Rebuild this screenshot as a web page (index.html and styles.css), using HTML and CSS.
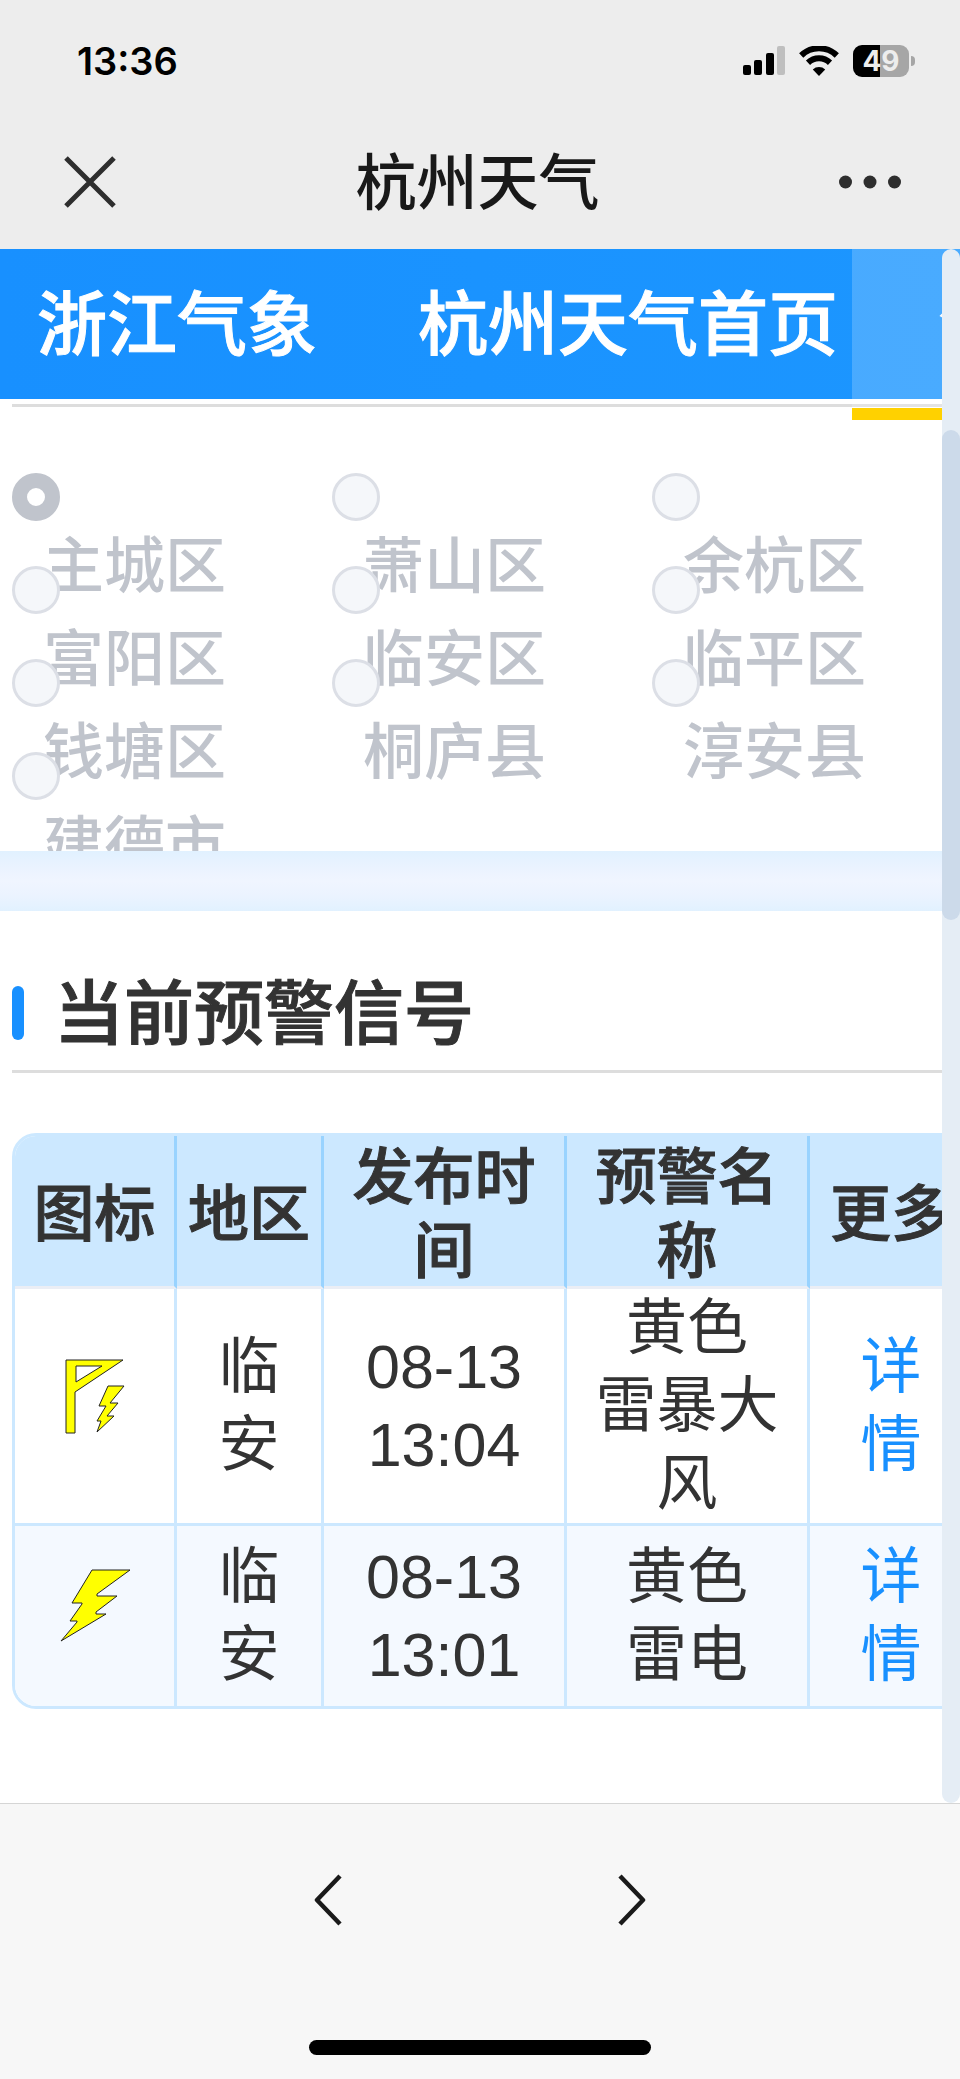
FILE: index.html
```html
<!DOCTYPE html>
<html lang="zh-CN">
<head>
<meta charset="utf-8">
<meta name="viewport" content="width=device-width, initial-scale=1">
<title>杭州天气</title>
<link rel="stylesheet" href="styles.css">
</head>
<body>
<header class="top">
  <div class="status">
    <time class="clock">13:36</time>
    <div class="indicators">
      <svg class="signal" width="42" height="30" viewBox="0 0 42 30" aria-hidden="true">
        <rect x="0" y="19" width="8" height="10" rx="2"/>
        <rect x="11" y="14" width="8" height="15" rx="2"/>
        <rect x="23" y="7" width="8" height="22" rx="2"/>
        <rect x="34" y="0" width="8" height="29" rx="2" fill="#bfbfbf"/>
      </svg>
      <svg class="wifi" width="40" height="30" viewBox="0 0 40 30" aria-hidden="true">
        <path d="M2.200 9.500A25.500 25.500 0 0 1 37.800 9.500" fill="none" stroke="#000" stroke-width="6"/>
        <path d="M9 16.700A16 16 0 0 1 31 16.700" fill="none" stroke="#000" stroke-width="6"/>
        <path d="M20 30L13.800 23.600A9 9 0 0 1 26.200 23.600Z"/>
      </svg>
      <div class="battery"><span class="battery-level">49</span></div>
    </div>
  </div>
  <div class="titlebar">
    <button class="icon-button" aria-label="关闭">
      <svg width="52" height="52" viewBox="0 0 52 52"><path d="M2 2L50 50M50 2L2 50" fill="none" stroke="#2e2e2e" stroke-width="5"/></svg>
    </button>
    <h1 class="title">杭州天气</h1>
    <button class="icon-button" aria-label="更多">
      <svg width="62" height="14" viewBox="0 0 62 14" fill="#2e2e2e"><circle cx="6.500" cy="7" r="6.500"/><circle cx="31" cy="7" r="6.500"/><circle cx="55.500" cy="7" r="6.500"/></svg>
    </button>
  </div>
</header>

<main class="page">
  <nav class="tabs">
    <a class="tab tab-first" href="#">浙江气象</a>
    <a class="tab" href="#">杭州天气首页</a>
    <a class="tab tab-active" href="#" aria-current="page">气象预警</a>
  </nav>

  <section class="regions">
    <div class="region-grid" role="radiogroup" aria-label="地区">
      <label class="region"><input type="radio" name="region" checked disabled><span>主城区</span></label>
      <label class="region"><input type="radio" name="region" disabled><span>萧山区</span></label>
      <label class="region"><input type="radio" name="region" disabled><span>余杭区</span></label>
      <label class="region"><input type="radio" name="region" disabled><span>富阳区</span></label>
      <label class="region"><input type="radio" name="region" disabled><span>临安区</span></label>
      <label class="region"><input type="radio" name="region" disabled><span>临平区</span></label>
      <label class="region"><input type="radio" name="region" disabled><span>钱塘区</span></label>
      <label class="region"><input type="radio" name="region" disabled><span>桐庐县</span></label>
      <label class="region"><input type="radio" name="region" disabled><span>淳安县</span></label>
      <label class="region"><input type="radio" name="region" disabled><span>建德市</span></label>
    </div>
  </section>

  <section class="warnings">
    <h2 class="heading">当前预警信号</h2>
    <div class="table-frame">
      <table class="table">
        <colgroup><col class="c-icon"><col class="c-area"><col class="c-wide"><col class="c-wide"><col class="c-more"></colgroup>
        <thead>
          <tr><th>图标</th><th>地区</th><th>发布时间</th><th>预警名称</th><th>更多</th></tr>
        </thead>
        <tbody>
          <tr>
            <td class="pic"><svg width="120" height="120" viewBox="0 0 120 120" role="img" aria-label="雷暴大风">
              <g fill="#ff0" stroke="#222" stroke-width="1">
                <path fill-rule="evenodd" d="M31 14H88L40 46V87H31ZM41 20V36L67 20Z"/>
                <path d="M73 40H89L75 57H83L72 70H79L62 86L66 75H62L71 60H64Z"/>
              </g></svg></td>
            <td>临安</td><td>08-13 13:04</td><td>黄色 雷暴大风</td><td><a href="#">详情</a></td>
          </tr>
          <tr>
            <td class="pic"><svg width="120" height="120" viewBox="0 0 120 120" role="img" aria-label="雷电">
              <path fill="#ff0" stroke="#222" stroke-width="1" d="M57 14H95L62 38V40H82L61 56V58H71L26 85L42 66V65H35L47 48V47H37Z"/></svg></td>
            <td>临安</td><td>08-13 13:01</td><td>黄色 雷电</td><td><a href="#">详情</a></td>
          </tr>
        </tbody>
      </table>
    </div>
  </section>
  <div class="scroll-track" aria-hidden="true"><div class="scroll-thumb"></div></div>
</main>

<footer class="toolbar">
  <div class="history">
    <button class="icon-button" aria-label="后退"><svg width="28" height="52" viewBox="0 0 28 52"><path d="M26 2L3 26L26 50" fill="none" stroke="#1a1a1a" stroke-width="4.500" stroke-linejoin="round"/></svg></button>
    <button class="icon-button" aria-label="前进"><svg width="28" height="52" viewBox="0 0 28 52"><path d="M2 2L25 26L2 50" fill="none" stroke="#1a1a1a" stroke-width="4.500" stroke-linejoin="round"/></svg></button>
  </div>
  <div class="home-bar"></div>
</footer>
</body>
</html>
```
FILE: styles.css
```css
* { box-sizing: border-box; }

body {
  margin: 0;
  background: #fff;
  color: #333;
  font-family: "Liberation Sans", "Noto Sans CJK SC", sans-serif;
  font-size: 61px;
}

a { color: inherit; text-decoration: none; }

.icon-button {
  display: flex;
  padding: 0;
  border: 0;
  background: none;
}

/* status bar and title */
.top { background: #ededed; }

.status {
  display: flex;
  justify-content: space-between;
  align-items: center;
  height: 122px;
  padding: 0 51px 0 77px;
}

.clock {
  font-family: Inter, sans-serif;
  font-size: 38px;
  font-weight: 600;
  color: #000;
}

.indicators { display: flex; align-items: center; gap: 14px; }

.battery {
  position: relative;
  width: 56px;
  height: 32px;
  border-radius: 9px;
  background: linear-gradient(to right, #000 49%, #a6a6a6 49%);
  color: #ededed;
  font: 700 28px/32px Inter, sans-serif;
  text-align: center;
}

.battery::after {
  content: "";
  position: absolute;
  left: 58px;
  top: 11px;
  width: 4px;
  height: 10px;
  border-radius: 0 4px 4px 0;
  background: #a6a6a6;
}

.titlebar {
  display: flex;
  justify-content: space-between;
  align-items: center;
  height: 127px;
  padding: 0 59px 8px 64px;
}

.title {
  margin: 0 0 5px;
  color: #191919;
  font: 500 61px/88px "Noto Sans CJK SC", sans-serif;
}

/* scrolling page */
.page {
  position: relative;
  overflow: hidden;
  background: #f0f5ff;
}

.tabs {
  position: relative;
  z-index: 2;
  display: flex;
  height: 150px;
  background: linear-gradient(to right, #1890ff, #1c96ff);
  color: #fff;
  font: 500 70px/142px "Noto Sans CJK SC", sans-serif;
  -webkit-text-stroke: 1px;
}

.tab {
  position: relative;
  flex: none;
  padding: 0 14px 0 87px;
}

.tab-first { padding-left: 37px; }

.tab-active::after {
  content: "";
  position: absolute;
  inset: 0 0 -21px;
  border-bottom: 12px solid #ffd100;
  background: rgba(255, 255, 255, 0.2) padding-box;
}

.regions {
  overflow: hidden;
  padding: 5px 0 6px 12px;
  background: #fff;
}

.region-grid {
  display: grid;
  grid-template-columns: repeat(3, 1fr);
  grid-auto-rows: 93px;
  margin-right: -12px;
  padding-top: 66px;
  border-top: 3px solid #ddd;
}

.region {
  display: block;
  color: #c0c4cc;
  font: 500 61px/93px "Noto Sans CJK SC", sans-serif;
}

.region span { display: block; margin-top: -6px; padding-left: 31px; }

.region input {
  position: relative;
  z-index: 1;
  display: block;
  appearance: none;
  width: 48px;
  height: 48px;
  margin: 0;
  border: 3px solid #dcdfe6;
  border-radius: 50%;
  background: #f5f7fa;
}

.region input:checked {
  border: 15px solid #c0c4cc;
  background: #fff;
}

.warnings {
  position: relative;
  margin-top: 60px;
  padding: 57px 0 94px 12px;
  background: #fff;
}

.warnings::before {
  content: "";
  position: absolute;
  inset: -60px 0 auto;
  height: 60px;
  background: linear-gradient(#e1f1ff, #ebf3ff 30%, #f0f5ff 50%, #ebf3ff 75%, #e1f1ff);
}

.heading {
  display: flex;
  align-items: flex-start;
  gap: 30px;
  height: 105px;
  margin: 0 0 60px;
  border-bottom: 3px solid #ddd;
  font: 500 70px/82px "Noto Sans CJK SC", sans-serif;
  -webkit-text-stroke: 1px;
}

.heading::before {
  content: "";
  width: 12px;
  height: 54px;
  margin-top: 18px;
  border-radius: 6px;
  background: #1890ff;
}

.table-frame {
  width: max-content;
  overflow: hidden;
  border: 3px solid #cce8ff;
  border-radius: 24px;
}

.table {
  table-layout: fixed;
  width: 960px;
  border-collapse: separate;
  border-spacing: 0;
  text-align: center;
}

.c-icon { width: 162px; }
.c-area { width: 147px; }
.c-wide { width: 243px; }
.c-more { width: 165px; }

.table th {
  padding: 0 0 2px;
  border-right: 3px solid #99d3ff;
  border-bottom: 3px solid #ebeef5;
  background: #cce8ff;
  font: 500 61px/74px "Noto Sans CJK SC", sans-serif;
  -webkit-text-stroke: 1px;
}

.table td {
  height: 180px;
  padding: 0 24px;
  border-right: 3px solid #cce8ff;
  border-bottom: 3px solid #cce8ff;
  background: #fff;
  line-height: 78px;
}

.table .pic { padding: 0; }
.pic svg { display: block; margin: 0 auto; }

.table tbody tr:nth-child(even) td { background: #f4f9ff; }
.table tbody tr:last-child td { border-bottom: 0; }
.table a { color: #1890ff; }

.scroll-track {
  position: absolute;
  z-index: 3;
  inset: 0 0 0 auto;
  width: 18px;
  padding-top: 181px;
  border-radius: 9px;
  background: #e5edf5;
}

.scroll-thumb {
  height: 490px;
  border-radius: 9px;
  background: #ccdaea;
}

/* browser toolbar */
.toolbar {
  display: flex;
  flex-direction: column;
  align-items: center;
  justify-content: space-between;
  height: 276px;
  padding: 70px 0 24px;
  border-top: 1px solid #d5d5d5;
  background: #f7f7f7;
}

.history { display: flex; gap: 276px; }

.home-bar {
  width: 342px;
  height: 15px;
  border-radius: 8px;
  background: #000;
}
```
